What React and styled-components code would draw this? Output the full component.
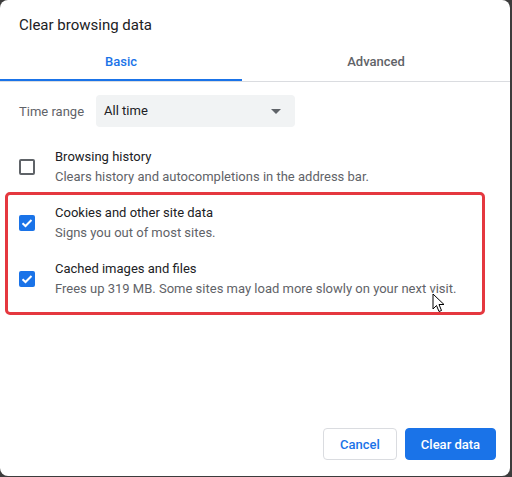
import React from "react";
import styled, { createGlobalStyle } from "styled-components";

const Global = createGlobalStyle`
  html, body { margin: 0; padding: 0; background: #3c3c3c; }
  body { font-family: Roboto, "Liberation Sans", Arial, sans-serif; }
  * { box-sizing: border-box; }
`;

const Dialog = styled.div`
  position: relative;
  width: 510px;
  height: 476px;
  background: #fff;
  border-radius: 8px;
  display: flex;
  flex-direction: column;
  overflow: hidden;
`;

const Title = styled.div`
  font-size: 15px;
  color: #202124;
  padding: 16px 19px 0;
  height: 42px;
  line-height: 18px;
`;

const TabBar = styled.div`
  display: flex;
  border-bottom: 1px solid #dadce0;
`;

const Tab = styled.div`
  flex: 0 0 ${(p) => p.$w}px;
  height: 39px;
  display: flex;
  align-items: center;
  justify-content: center;
  font-size: 13px;
  font-weight: 500;
  color: ${(p) => (p.$active ? "#1a73e8" : "#5f6368")};
  box-shadow: ${(p) => (p.$active ? "inset 0 -2px 0 #1a73e8" : "none")};
`;

const Body = styled.div`
  padding: 13px 19px 0;
  display: flex;
  flex-direction: column;
`;

const RangeRow = styled.div`
  display: flex;
  align-items: center;
  gap: 12px;
  margin-bottom: 12px;
`;

const Label = styled.span`
  font-size: 13px;
  color: #5f6368;
`;

const Select = styled.div`
  width: 199px;
  height: 32px;
  background: #f1f3f4;
  border-radius: 4px;
  display: flex;
  align-items: center;
  justify-content: space-between;
  padding: 0 8px;
  font-size: 13px;
  line-height: 30px;
  color: #202124;
`;

const Arrow = styled.span`
  width: 0;
  height: 0;
  border-left: 5px solid transparent;
  border-right: 5px solid transparent;
  border-top: 5px solid #5f6368;
  margin-right: 6px;
`;

const Row = styled.div`
  height: 56px;
  display: flex;
  align-items: center;
  gap: 20px;
`;

const Box = styled.div`
  width: 16px;
  height: 16px;
  border-radius: 2px;
  flex: 0 0 16px;
  display: flex;
  align-items: center;
  justify-content: center;
  background: ${(p) => (p.$checked ? "#1a73e8" : "#fff")};
  border: ${(p) => (p.$checked ? "none" : "2px solid #5f6368")};
`;

const Texts = styled.div`
  display: flex;
  flex-direction: column;
  font-size: 13px;
  line-height: 20px;
`;

const RowTitle = styled.span`
  color: #202124;
`;

const RowSub = styled.span`
  color: #5f6368;
`;

const Highlight = styled.div`
  position: absolute;
  left: 5px;
  top: 192px;
  width: 480px;
  height: 123px;
  border: 3px solid #e5383f;
  border-radius: 5px;
  pointer-events: none;
`;

const Cursor = styled.svg`
  position: absolute;
  left: 432px;
  top: 293px;
`;

const Footer = styled.div`
  margin-top: auto;
  display: flex;
  justify-content: flex-end;
  gap: 8px;
  padding: 0 14px 16px;
`;

const Button = styled.button`
  height: 32px;
  padding: 0;
  white-space: nowrap;
  border-radius: 4px;
  font-family: Roboto, "Liberation Sans", Arial, sans-serif;
  font-size: 13px;
  font-weight: 500;
  cursor: pointer;
  color: ${(p) => (p.$primary ? "#fff" : "#1a73e8")};
  background: ${(p) => (p.$primary ? "#1a73e8" : "#fff")};
  border: 1px solid ${(p) => (p.$primary ? "#1a73e8" : "#dadce0")};
  width: ${(p) => p.$w}px;
`;

const Check = () => (
  <svg width="12" height="10" viewBox="0 0 12 10">
    <path d="M1.5 5.2 L4.5 8 L10.5 2" fill="none" stroke="#fff" strokeWidth="2" />
  </svg>
);

const items = [
  { t: "Browsing history", s: "Clears history and autocompletions in the address bar.", c: false },
  { t: "Cookies and other site data", s: "Signs you out of most sites.", c: true },
  { t: "Cached images and files", s: "Frees up 319 MB. Some sites may load more slowly on your next visit.", c: true },
];

export default function App() {
  return (
    <>
      <Global />
      <Dialog>
        <Title>Clear browsing data</Title>
        <TabBar>
          <Tab $w={242} $active>Basic</Tab>
          <Tab $w={268}>Advanced</Tab>
        </TabBar>
        <Body>
          <RangeRow>
            <Label>Time range</Label>
            <Select>
              All time
              <Arrow />
            </Select>
          </RangeRow>
          {items.map((it) => (
            <Row key={it.t}>
              <Box $checked={it.c}>{it.c && <Check />}</Box>
              <Texts>
                <RowTitle>{it.t}</RowTitle>
                <RowSub>{it.s}</RowSub>
              </Texts>
            </Row>
          ))}
        </Body>
        <Footer>
          <Button $w={74}>Cancel</Button>
          <Button $w={91} $primary>Clear data</Button>
        </Footer>
        <Highlight />
        <Cursor width="13" height="20" viewBox="0 0 13 20">
          <path d="M1 1 L1 16 L4.5 12.5 L7 18.5 L9.5 17.5 L7 11.5 L12 11.5 Z" fill="#fff" stroke="#000" strokeWidth="1" strokeLinejoin="round" />
        </Cursor>
      </Dialog>
    </>
  );
}
